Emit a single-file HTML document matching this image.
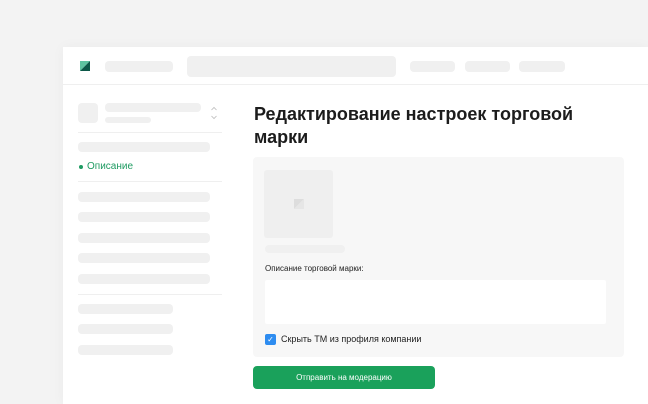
<!DOCTYPE html>
<html><head><meta charset="utf-8"><style>
*{margin:0;padding:0;box-sizing:border-box}
body{width:648px;height:404px;background:#f3f3f3;position:relative;overflow:hidden;font-family:"Liberation Sans",sans-serif}
.card{position:absolute;left:63px;top:47px;width:585px;height:357px;background:#fff;box-shadow:0 0 12px rgba(0,0,0,.04)}
.b{position:absolute;background:#f0f0f0;border-radius:4px}
.line{position:absolute;height:1px;background:#efefef}
.abs{position:absolute}
</style></head><body>
<div class="card"></div>
<svg class="abs" style="left:80px;top:61px" width="10" height="10"><polygon points="0,0 10,0 0,10" fill="#5ec3a0"/><polygon points="10,0 10,10 0,10" fill="#0d5848"/></svg>
<div class="b" style="left:105px;top:61px;width:68px;height:11px"></div>
<div class="b" style="left:187px;top:56px;width:209px;height:21px"></div>
<div class="b" style="left:410px;top:61px;width:45px;height:11px"></div>
<div class="b" style="left:465px;top:61px;width:45px;height:11px"></div>
<div class="b" style="left:519px;top:61px;width:46px;height:11px"></div>
<div class="line" style="left:63px;top:84px;width:585px"></div>
<div class="b" style="left:78px;top:103px;width:20px;height:20px"></div>
<div class="b" style="left:105px;top:103px;width:96px;height:9px"></div>
<div class="b" style="left:105px;top:117px;width:46px;height:6px"></div>
<svg class="abs" style="left:210px;top:106px" width="8" height="14"><path d="M1.5 4 L4 1.5 L6.5 4 M1.5 10 L4 12.5 L6.5 10" fill="none" stroke="#bbb" stroke-width="0.8"/></svg>
<div class="line" style="left:78px;top:132px;width:144px"></div>
<div class="b" style="left:78px;top:142px;width:132px;height:10px"></div>
<div class="abs" style="left:79px;top:165px;width:4px;height:4px;border-radius:50%;background:#1f9b62"></div>
<div class="abs" style="left:87px;top:161px;font-size:10px;color:#1f9b62">Описание</div>
<div class="line" style="left:78px;top:181px;width:144px"></div>
<div class="b" style="left:78px;top:192px;width:132px;height:10px"></div>
<div class="b" style="left:78px;top:212px;width:132px;height:10px"></div>
<div class="b" style="left:78px;top:233px;width:132px;height:10px"></div>
<div class="b" style="left:78px;top:253px;width:132px;height:10px"></div>
<div class="b" style="left:78px;top:274px;width:132px;height:10px"></div>
<div class="line" style="left:78px;top:294px;width:144px"></div>
<div class="b" style="left:78px;top:304px;width:95px;height:10px"></div>
<div class="b" style="left:78px;top:324px;width:95px;height:10px"></div>
<div class="b" style="left:78px;top:345px;width:95px;height:10px"></div>
<div class="abs" style="left:254px;top:103px;font-size:18px;font-weight:bold;color:#1c1c1c;line-height:23px;width:340px">Редактирование настроек торговой марки</div>
<div class="abs" style="left:253px;top:157px;width:371px;height:200px;background:#f7f7f7;border-radius:4px"></div>
<div class="abs" style="left:264px;top:170px;width:69px;height:68px;background:#efefef;border-radius:3px"></div>
<svg class="abs" style="left:294px;top:199px" width="10" height="10"><polygon points="0,0 10,0 0,10" fill="#ddd"/><polygon points="10,0 10,10 0,10" fill="#e6e6e6"/></svg>
<div class="b" style="left:265px;top:245px;width:80px;height:8px"></div>
<div class="abs" style="left:265px;top:264px;font-size:8px;color:#222">Описание торговой марки:</div>
<div class="abs" style="left:265px;top:280px;width:341px;height:44px;background:#fff;border-radius:2px"></div>
<div class="abs" style="left:265px;top:334px;width:11px;height:11px;background:#2d8cf0;border-radius:2px;color:#fff;font-size:8px;line-height:11px;text-align:center">✓</div>
<div class="abs" style="left:281px;top:334px;font-size:9px;color:#222">Скрыть ТМ из профиля компании</div>
<div class="abs" style="left:253px;top:366px;width:182px;height:23px;background:#1aa15b;border-radius:4px;color:#fff;font-size:8px;text-align:center;line-height:23px">Отправить на модерацию</div>
</body></html>
